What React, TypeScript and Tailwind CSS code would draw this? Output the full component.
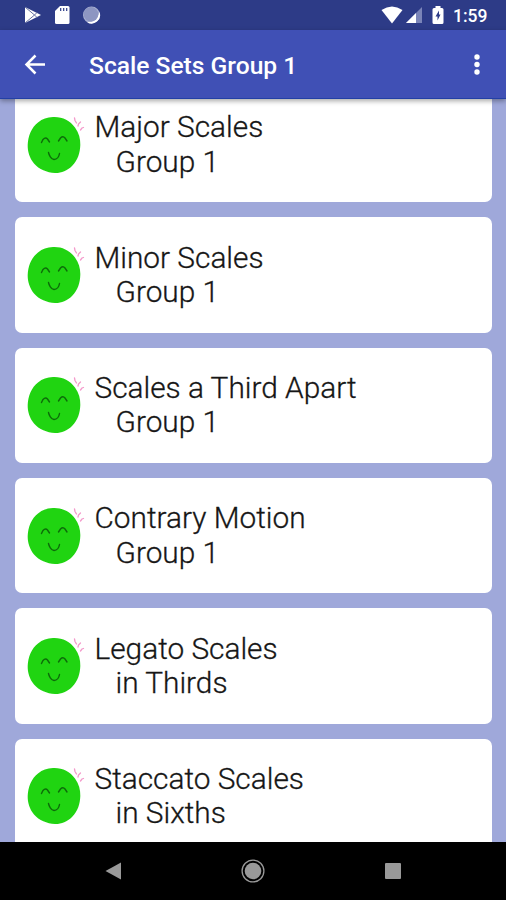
const scaleSets = [
  { title: 'Major Scales', subtitle: 'Group 1' },
  { title: 'Minor Scales', subtitle: 'Group 1' },
  { title: 'Scales a Third Apart', subtitle: 'Group 1' },
  { title: 'Contrary Motion', subtitle: 'Group 1' },
  { title: 'Legato Scales', subtitle: 'in Thirds' },
  { title: 'Staccato Scales', subtitle: 'in Sixths' },
];

function Smiley() {
  return (
    <svg width="60" height="60" viewBox="0 0 60 60" fill="none" className="shrink-0">
      <path
        d="M26 2C35 1.500 43 5.500 48 12.500C52 18 53.500 24 53.300 30C53 38 51 45 45 51C40 56 34 58.200 28 58C20 57.500 12 54.500 7 48.500C2.500 43 .500 36 .700 30C1 21 4.500 12.500 11 7.500C15.500 3.800 20 2.200 26 2Z"
        fill="#20d411"
      />
      <g stroke="#0d6b0a" strokeWidth="1.400" strokeLinecap="round">
        <path d="M14.500 27.500L16 24.500Q18.500 22 20.500 24L22.500 27" />
        <path d="M31.500 26L33.500 23Q36 20.500 38 23L40 26" />
        <path d="M21.500 37.500C22 40 24 44.300 27 44.500C30 44.300 32 41.500 32.500 38.500" />
      </g>
      <g stroke="#f49acb" strokeWidth="1.300" strokeLinecap="round">
        <path d="M47.500 3L48 5.500L49.500 8" />
        <path d="M53.500 7L51.500 9L51 11" />
        <path d="M56.500 12.500L55 13L53.500 15" />
      </g>
    </svg>
  );
}

function StatusBar() {
  return (
    <div className="flex h-[30px] shrink-0 items-center bg-[#2d3b87] pl-[24px] pr-[18px] text-white">
      <svg width="18" height="18" viewBox="0 0 18 18">
        <path d="M1 1L17 9L1 17Z" fill="#fff" />
        <path d="M1 1L10.500 9L1 17M10.500 9L13 6.500M10.500 9L13 11.500" stroke="#66709f" strokeWidth="1" fill="none" />
      </svg>
      <svg width="16" height="20" viewBox="0 0 16 20" className="ml-[12px]">
        <path d="M6 1H14Q15.500 1 15.500 2.500V17.500Q15.500 19 14 19H2.500Q1 19 1 17.500V6Z" fill="#fff" />
        <path d="M6.700 3V6M9.700 3V6M12.700 3V6" stroke="#2d3b87" strokeWidth="1.200" />
      </svg>
      <svg width="20" height="20" viewBox="0 0 20 20" className="ml-[12px]">
        <circle cx="9.500" cy="10" r="8.500" fill="#a9b0d2" />
        <path d="M17.500 7A8.500 8.500 0 0 1 5 17.200Q15 17.500 17.500 7Z" fill="#fff" />
        <circle cx="9" cy="9.400" r="7.300" fill="#8d96c2" />
      </svg>
      <div className="grow" />
      <svg width="22" height="18" viewBox="0 0 22 18">
        <path d="M.500 4Q11-3 21.500 4L11 17.500Z" fill="#fff" />
      </svg>
      <svg width="18" height="18" viewBox="0 0 18 18" className="ml-[2px]">
        <path d="M17 1V17H1Z" fill="#7a84b8" />
        <path d="M11 7V17H1Z" fill="#fff" />
      </svg>
      <svg width="14" height="20" viewBox="0 0 14 20" className="ml-[8px]">
        <path d="M4.500 1H9.500V3H11Q12.500 3 12.500 4.500V17.500Q12.500 19 11 19H3Q1.500 19 1.500 17.500V4.500Q1.500 3 3 3H4.500Z" fill="#fff" />
        <path d="M8 5.500L4.500 11.500H6.500V15.500L9.500 9.500H8Z" fill="#2d3b87" />
      </svg>
      <span className="ml-[8px] w-[35px] pt-[3px] text-[17.500px] leading-none font-medium whitespace-nowrap">1:59</span>
    </div>
  );
}

function AppBar() {
  return (
    <div className="relative z-10 flex h-[69px] shrink-0 items-center border-b border-[#2340a5] bg-[#4050b5] px-[24px] text-white shadow-[0_2px_5px_rgba(0,0,0,0.35)]">
      <svg width="22" height="22" viewBox="0 0 22 22" fill="none" stroke="#fff" strokeWidth="2.500">
        <path d="M21 11.500H3M11.500 2.500L2.500 11.500L11.500 20.500" />
      </svg>
      <h1 className="ml-[43px] pt-[4px] text-[24.600px] leading-none font-medium whitespace-nowrap">Scale Sets Group 1</h1>
      <svg width="6" height="22" viewBox="0 0 6 22" fill="#fff" className="ml-auto mr-[2px]">
        <circle cx="3" cy="4" r="2.700" />
        <circle cx="3" cy="11.500" r="2.700" />
        <circle cx="3" cy="19" r="2.700" />
      </svg>
    </div>
  );
}

function NavBar() {
  return (
    <div className="flex h-[58px] shrink-0 items-center justify-between bg-black pl-[105px] pr-[105px]">
      <svg width="17" height="18" viewBox="0 0 17 18">
        <path d="M.500 9L16 .500V17.500Z" fill="#999" />
      </svg>
      <svg width="24" height="24" viewBox="0 0 24 24" className="-ml-px">
        <circle cx="12" cy="12" r="10.900" fill="none" stroke="#999" strokeWidth="1.300" />
        <circle cx="12" cy="12" r="8.300" fill="#999" />
      </svg>
      <div className="h-4 w-4 rounded-[1px] bg-[#999]" />
    </div>
  );
}

export default function App() {
  return (
    <div className="flex h-[900px] w-[506px] flex-col overflow-hidden bg-[#9fa8da] font-[Roboto,sans-serif]">
      <StatusBar />
      <AppBar />
      <div className="min-h-0 grow overflow-hidden px-[15px]">
        <div className="mt-[-12.200px] flex flex-col gap-[15px]">
          {scaleSets.map((set) => (
            <div key={set.title} className="flex h-[115.400px] w-[477px] shrink-0 items-center rounded-[7px] bg-white pl-[12px]">
              <Smiley />
              <div className="ml-[7.500px] text-[29.800px] leading-[34.300px] font-light whitespace-nowrap text-[#161616] [-webkit-text-stroke:0.3px_#161616]">
                <div>{set.title}</div>
                <div className="pl-[21px]">{set.subtitle}</div>
              </div>
            </div>
          ))}
        </div>
      </div>
      <NavBar />
    </div>
  );
}
